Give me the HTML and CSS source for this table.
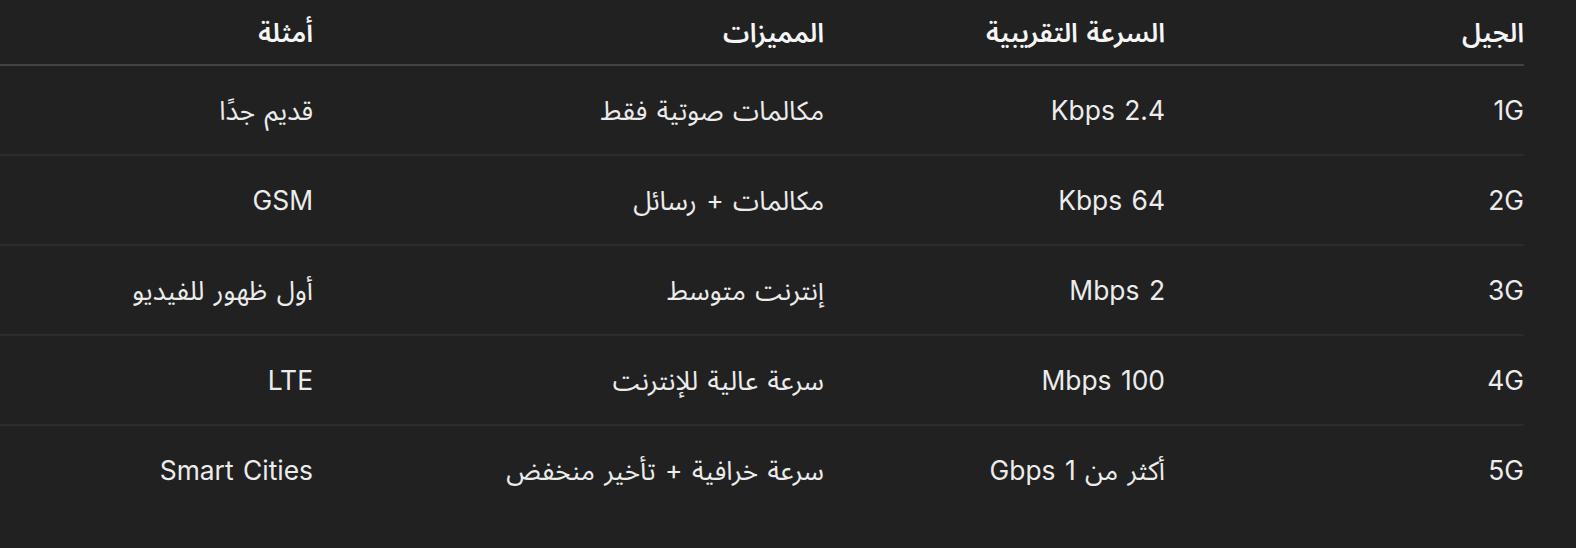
FILE: index.html
```html
<!DOCTYPE html>
<html lang="ar" dir="rtl">
<head>
<meta charset="utf-8">
<title>أجيال الشبكات</title>
<link rel="stylesheet" href="styles.css">
</head>
<body>
<div class="wrap">
  <table class="gen-table">
    <thead>
      <tr>
        <th class="c1">الجيل</th>
        <th class="c2">السرعة التقريبية</th>
        <th class="c3">المميزات</th>
        <th class="c4">أمثلة</th>
      </tr>
    </thead>
    <tbody>
      <tr>
        <td>1G</td>
        <td>2.4 Kbps</td>
        <td>مكالمات صوتية فقط</td>
        <td>قديم جدًا</td>
      </tr>
      <tr>
        <td>2G</td>
        <td>64 Kbps</td>
        <td>مكالمات + رسائل</td>
        <td>GSM</td>
      </tr>
      <tr>
        <td>3G</td>
        <td>2 Mbps</td>
        <td>إنترنت متوسط</td>
        <td>أول ظهور للفيديو</td>
      </tr>
      <tr>
        <td>4G</td>
        <td>100 Mbps</td>
        <td>سرعة عالية للإنترنت</td>
        <td>LTE</td>
      </tr>
      <tr>
        <td>5G</td>
        <td>أكثر من 1 Gbps</td>
        <td>سرعة خرافية + تأخير منخفض</td>
        <td>Smart Cities</td>
      </tr>
    </tbody>
  </table>
</div>
</body>
</html>
```
FILE: styles.css
```css
html, body {
  margin: 0;
  padding: 0;
  background: #212121;
}

body {
  color: #ececec;
  font-family: Inter, "Noto Sans Arabic", "Noto Sans", "DejaVu Sans", sans-serif;
  font-size: 26.4px;
  line-height: 38.4px;
  word-spacing: 2px;
}

.wrap {
  direction: rtl;
  overflow: hidden;
  padding-right: 52px;
}

.gen-table {
  border-collapse: collapse;
  table-layout: fixed;
  width: 1611px;
}

.gen-table th,
.gen-table td {
  box-sizing: border-box;
  text-align: right;
  padding: 0 0 0 25.6px;
}

.gen-table th {
  font-weight: 600;
  color: #f5f5f5;
  height: 65px;
  border-bottom: 2px solid #434343;
}

.gen-table td {
  height: 90px;
  border-bottom: 2px solid #2c2c2c;
}

.gen-table tbody tr:last-child td {
  border-bottom: none;
}

.c1 { width: 359px; }
.c2 { width: 341px; }
.c3 { width: 511px; }
.c4 { width: 400px; }
```
